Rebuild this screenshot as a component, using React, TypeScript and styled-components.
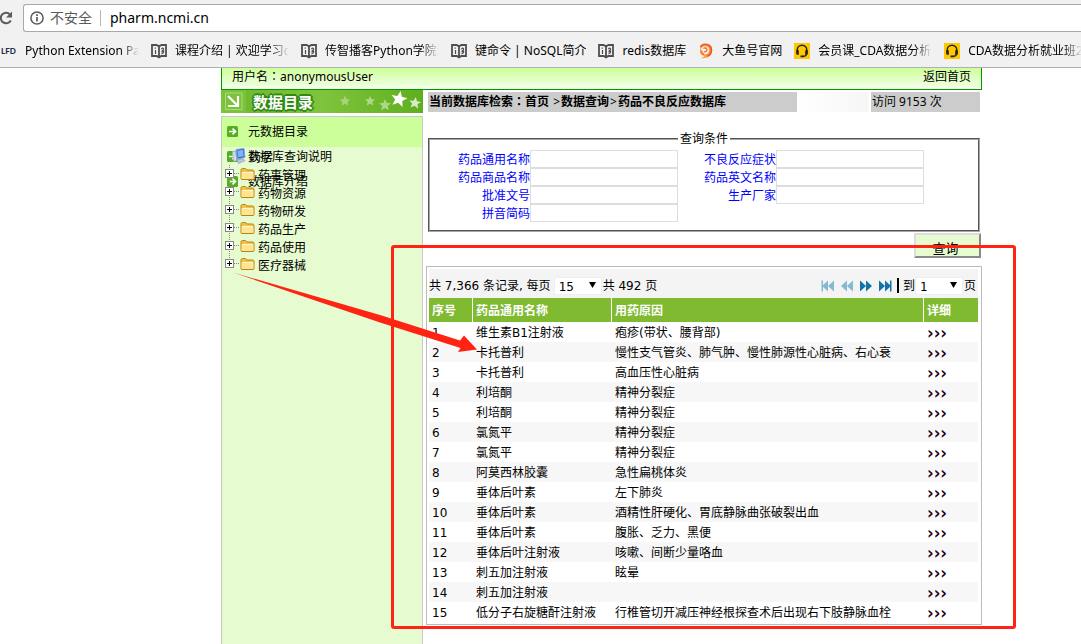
import React from "react";
import styled, { createGlobalStyle } from "styled-components";

const GlobalStyle = createGlobalStyle`
  * { box-sizing: border-box; }
  body {
    margin: 0;
    background: #fff;
    color: #000;
    font: 12px/18px "Noto Sans", "Noto Sans CJK SC", sans-serif;
  }
  a { color: inherit; text-decoration: none; }
  ul { list-style: none; margin: 0; padding: 0; }
  button, input, select { font: inherit; color: inherit; }
`;

const Screen = styled.div`
  position: relative;
  display: flex;
  flex-direction: column;
  min-height: 100vh;
  overflow: hidden;
`;

/* Browser chrome */
const Chrome = styled.header`
  flex: none;
  height: 68px;
  background: #f1f1f1;
  border-bottom: 1px solid #b0b0b0;
  overflow: hidden;
`;
const AddressRow = styled.div`
  display: flex;
  align-items: center;
  gap: 9px;
  padding-top: 4px;
`;
const ReloadButton = styled.button`
  display: flex;
  width: 14px;
  height: 16px;
  padding: 0;
  border: 0;
  background: none;
`;
const AddressBox = styled.div`
  flex: 1;
  display: flex;
  align-items: center;
  height: 28px;
  padding-left: 6px;
  background: #fff;
  border: 1px solid #a9a9a9;
  border-right: 0;
  border-radius: 3px 0 0 3px;
  font-size: 14px;
`;
const Insecure = styled.span`
  margin-left: 6px;
  padding-right: 8px;
  line-height: 16px;
  color: #5a5a5a;
  border-right: 1px solid #b5b5b5;
`;
const Url = styled.input`
  flex: 1;
  min-width: 0;
  margin-left: 9px;
  padding: 0;
  border: 0;
  outline: 0;
  background: none;
`;
const Bookmarks = styled.nav`
  display: flex;
  gap: 12px;
  padding: 9px 0 0 1px;
`;
const Bookmark = styled.a<{ $fade?: boolean }>`
  flex: none;
  display: flex;
  align-items: center;
  gap: 8px;
  height: 20px;
  white-space: nowrap;
  svg { flex: none; }
  span {
    max-width: 114px;
    overflow: hidden;
    ${(p) => p.$fade && "mask-image: linear-gradient(to right, #000 84%, transparent);"}
  }
`;

/* Site */
const Site = styled.div`
  flex: 1;
  display: flex;
  flex-direction: column;
  margin: 0 99px 0 221px;
`;
const UserBar = styled.div`
  display: flex;
  justify-content: space-between;
  height: 22px;
  padding: 0 10px;
  border: 1px solid #090;
  border-top: 0;
  background: linear-gradient(#ccff99, #f6ffec);
`;
const ColonText = styled.span`
  font-family: "Noto Sans CJK TC", sans-serif;
  line-height: 1;
`;
const Colon = () => <ColonText lang="zh-TW">：</ColonText>;
const Columns = styled.div`
  flex: 1;
  display: flex;
  gap: 3px;
`;
const Sidebar = styled.aside`
  flex: none;
  width: 202px;
  display: flex;
  flex-direction: column;
  gap: 3px;
`;
const Banner = styled.h2`
  display: flex;
  align-items: center;
  justify-content: space-between;
  height: 23px;
  margin: 0;
  background: linear-gradient(to right, #6cb52a, #7fc43c 50%, #5fae1e);
  color: #fff;
  font: bold 15px/20px "Noto Sans CJK SC", sans-serif;
  text-shadow: 1px 1px #2f8a14, -1px -1px #2f8a14, 1px -1px #2f8a14, -1px 1px #2f8a14,
    0 2px #2f8a14, 2px 0 #2f8a14, -2px 0 #2f8a14, 0 -2px #2f8a14;
`;
const BannerTitle = styled.span`
  flex: 1;
  padding-left: 7px;
`;
const Menu = styled.div`
  position: relative;
  flex: 1;
  border: 1px solid #c8c8c8;
  border-bottom: 0;
  background: #e6fcd0;
`;
const MenuItem = styled.li<{ $active?: boolean }>`
  height: ${(p) => (p.$active ? 30 : 25)}px;
  background: ${(p) => (p.$active ? "#ccff99" : "transparent")};
  a {
    display: flex;
    align-items: center;
    gap: 10px;
    height: ${(p) => (p.$active ? 28 : 18)}px;
    padding-left: 5px;
  }
  span { padding-top: 2px; }
`;
const Tree = styled.ul`
  position: absolute;
  top: 30px;
  left: 3px;
`;
const TreeItem = styled.li`
  display: flex;
  align-items: center;
  height: 18px;
  svg { flex: none; }
  a {
    margin-left: 3px;
    padding-top: 3px;
  }
`;

const Main = styled.main`
  flex: 1;
  min-width: 0;
  display: flex;
  flex-direction: column;
`;
const Crumbs = styled.div`
  display: flex;
  height: 20px;
  margin: 2px 2px 0;
  line-height: 20px;
`;
const CrumbPath = styled.div`
  flex: 1;
  padding-left: 1px;
  background: #ccc;
  font-weight: bold;
`;
const CrumbMark = styled.span`
  padding: 0 1px;
  font-weight: normal;
`;
const CrumbFade = styled.div`
  width: 74px;
  background: linear-gradient(to right, #fff, #f6f6f6 95%, #fff 98%);
`;
const Visits = styled.div`
  width: 109px;
  padding-left: 1px;
  background: #ccc;
`;
const QueryForm = styled.form`
  margin: 18px 2px 0;
  display: flex;
  flex-direction: column;
`;
const Conditions = styled.fieldset`
  height: 102px;
  margin: 0;
  padding: 2px 0 0;
  border: 2px groove #a8a8a8;
  legend {
    margin: 0 auto;
    padding: 0 2px;
  }
`;
const Fields = styled.div`
  display: flex;
  justify-content: space-between;
  padding: 0 54px 0 28px;
`;
const FieldColumn = styled.div`
  display: flex;
  flex-direction: column;
  align-items: flex-end;
`;
const Field = styled.label`
  display: flex;
  height: 18px;
  line-height: 20px;
  color: #00f;
  input {
    width: 148px;
    height: 18px;
    padding: 0 2px;
    border: 1px solid #ddd;
    outline: 0;
    color: #000;
    background: #fff;
  }
`;
const QueryButton = styled.button`
  align-self: flex-end;
  width: 67px;
  height: 25px;
  margin: 1px -1px 0 0;
  padding: 5px 4px 0 0;
  border: 2px outset #ddd;
  background: #e6fcd0;
  font-size: 13px;
  line-height: 17px;
`;
const Results = styled.section`
  margin: 8px 0 0;
  padding: 2px;
  border: 1px solid #bbb;
  font-family: "DejaVu Sans", "Noto Sans CJK SC", sans-serif;
`;
const Toolbar = styled.div`
  display: flex;
  justify-content: space-between;
  height: 29px;
  margin-right: 1px;
  padding: 4px 2px 0 0;
  background: #f4f4f4;
`;
const ToolGroup = styled.div`
  display: flex;
  align-items: center;
  white-space: nowrap;
`;
const SelectBox = styled.label<{ $before: number }>`
  position: relative;
  display: inline-flex;
  margin: 0 1px 0 ${(p) => p.$before}px;
  select {
    appearance: none;
    width: 48px;
    height: 18px;
    padding: 0 4px;
    border: 1px solid #eee;
    border-radius: 0;
    background: #fff;
  }
  svg {
    position: absolute;
    right: 6px;
    top: 5px;
    pointer-events: none;
  }
`;
const PageButton = styled.button`
  display: flex;
  width: 19px;
  height: 14px;
  padding: 0;
  border: 0;
  background: none;
`;
const Divider = styled.span`
  width: 2px;
  height: 15px;
  margin: 0 4px 0 0;
  background: #000;
`;
const Table = styled.table`
  width: calc(100% - 1px);
  margin-right: 1px;
  border-collapse: separate;
  border-spacing: 0;
  table-layout: fixed;
  th {
    height: 24px;
    padding: 2px 3px 0;
    background: #7fba31;
    color: #fff;
    text-align: left;
    border-right: 1px solid #fff;
  }
  th:last-child { border-right: 0; }
  td {
    height: 20px;
    padding: 2px 3px 0;
    white-space: nowrap;
  }
  tbody tr:nth-child(even) { background: #f7f7f7; }
`;
const Detail = styled.a`
  display: block;
  color: #1a0020;
  font: bold 18px/16px "DejaVu Sans Condensed", "DejaVu Sans", sans-serif;
`;

/* Red marks drawn over the page */
const Highlight = styled.div`
  position: absolute;
  top: 245px;
  left: 391px;
  right: 65px;
  height: 384px;
  border: 3px solid #ff2314;
  border-radius: 3px;
  pointer-events: none;
`;
const Arrow = styled.svg`
  position: absolute;
  top: 265px;
  left: 230px;
  pointer-events: none;
`;

const BookIcon = () => (
  <svg width="16" height="16" viewBox="0 0 16 16" fill="none" stroke="#4f4f4f" strokeWidth="1.8">
    <path d="M1 2h4.500L8 3.400 10.500 2H15v11h-4.600L8 14.400 5.600 13H1zM8 3.400v10.800" />
    <path d="M4.200 4.500v1.300M4.500 7v4M10.500 6.200c.2-1.600 2.200-1.400 2 .2-.2 1.200-1.800 1.100-1.500 2.300l1.600-.4c.2 1.600-1 2.600-2.200 2.400" strokeWidth="1.200" />
  </svg>
);
const FishIcon = () => (
  <svg width="16" height="16" viewBox="0 0 16 16" fill="none">
    <path d="M2.500 3.500C5-.5 13.800.2 14.200 7c.3 5-4.200 8.600-11.400 8.200 1.800-.5 3-1.200 3.800-2.200C3 12.500 1.800 10 2 8" fill="#ff9a3a" />
    <path d="M2.500 4C5-.3 13.400.6 13.400 7c0 3.200-1.600 5.200-4 6.300" stroke="#f4511e" strokeWidth="1.600" />
    <circle cx="7" cy="7.300" r="4" fill="#f1f1f1" />
    <path d="M5.500 5.600c1.500-1.600 4-.2 3.300 1.800-.4 1.300-1.800 1.700-3 1.500M3.500 7.500c0 2 1 3.500 2.500 3.700" stroke="#f4661e" strokeWidth="1.300" />
  </svg>
);
const HeadsetIcon = () => (
  <svg width="16" height="16" viewBox="0 0 16 16" fill="none">
    <rect width="16" height="16" fill="#ffc800" />
    <path d="M3.200 8.500V7a4.800 4.800 0 0 1 9.600 0v2.500c0 2.500-1.500 3.900-4 4" stroke="#222" strokeWidth="1.400" />
    <path d="M2.200 7.200h2.600v4.600H3.600c-.9 0-1.400-.6-1.400-1.400zM11.200 7.200h2.600v3.200c0 .8-.5 1.400-1.400 1.400h-1.200zM6.500 12.500h3v1.800h-3z" fill="#222" />
  </svg>
);
const LfdIcon = () => (
  <svg width="16" height="16" viewBox="0 0 16 16">
    <text x="0" y="11" fontFamily="Lato, sans-serif" fontWeight="900" fontSize="8" fill="#26324f">LFD</text>
  </svg>
);
const ArrowBox = () => (
  <svg width="11" height="11" viewBox="0 0 11 11">
    <rect width="11" height="11" rx="1.500" fill="#55ad20" />
    <path d="M2 5.500h6M5.500 2.700l3 2.800-3 2.800" stroke="#fff" strokeWidth="1.700" fill="none" />
  </svg>
);
const PlusLines = ({ last }: { last?: boolean }) => (
  <svg width="15" height="18" viewBox="0 0 15 18" fill="none" shapeRendering="crispEdges">
    <path d={last ? "M4.500 0v9" : "M4.500 0v18"} stroke="#888" strokeDasharray="1 1" />
    <path d="M9 8.500h6" stroke="#888" strokeDasharray="1 1" />
    <rect x=".5" y="4.500" width="8" height="8" fill="#fff" stroke="#888" />
    <path d="M2 8.500h5M4.500 6v5" stroke="#000" />
  </svg>
);
const FolderIcon = () => (
  <svg width="15" height="14" viewBox="0 0 15 14">
    <path d="M1 3.200C1 2 1.500 1.500 2.500 1.500h3L7 3h5.500c1 0 1.500.5 1.500 1.500v7c0 .7-.4 1-1 1H2c-.7 0-1-.3-1-1z" fill="#f2c14a" stroke="#b98512" />
    <path d="M1.500 5.500h12v5.800c0 .5-.2.700-.7.700H2.200c-.5 0-.7-.2-.7-.7z" fill="#ffe593" />
    <path d="M2 5.500h11" stroke="#fff6cf" />
  </svg>
);
const ComputerIcon = () => (
  <svg width="15" height="16" viewBox="0 0 15 16">
    <path d="M5 1.500l8-1 1 9-7.500 1.500z" fill="#2f66d0" stroke="#8aa4d8" />
    <path d="M6.200 2.700l5.800-.8.600 6.400-5.200 1z" fill="#7db4ff" />
    <path d="M6 12l6-1.200 2 2-6.500 2.700z" fill="#bcc8de" stroke="#7f90b5" strokeWidth=".6" />
    <path d="M1.500 3.500l3-.5 1.300 9.500-3 1z" fill="#cfdcf2" stroke="#8aa4d8" strokeWidth=".6" />
  </svg>
);
const star = "M0-6L1.700-2 6-1.800 2.700 1 3.800 5.200 0 2.900-3.800 5.200-2.700 1-6-1.800-1.700-2z";
const BannerStars = () => (
  <svg width="90" height="23" viewBox="0 0 90 23" fill="#fff">
    <path d={star} transform="translate(12 11) scale(.9)" opacity=".35" />
    <path d={star} transform="translate(37 11) scale(.85)" opacity=".45" />
    <path d={star} transform="translate(52 15)" opacity=".45" />
    <path d={star} transform="translate(66 9) rotate(12) scale(1.350)" />
    <path d={star} transform="translate(82 13) rotate(8)" opacity=".75" />
  </svg>
);
const BannerArrow = () => (
  <svg width="25" height="23" viewBox="0 0 25 23" fill="none">
    <rect width="25" height="23" fill="#7cc23c" />
    <path d="M4.500 20V3h16.500v16.500H4.500" stroke="#a8dc78" />
    <path d="M7 6l9 9M17 6v10H7" stroke="#fff" strokeWidth="2.200" />
  </svg>
);
const Triangle = () => (
  <svg width="7" height="6" viewBox="0 0 7 6"><path d="M0 0h7L3.500 6z" /></svg>
);

type PageKind = "first" | "prev" | "next" | "last";
const PageIcon = ({ kind }: { kind: PageKind }) => {
  const back = kind === "first" || kind === "prev";
  const bar = kind === "first" || kind === "last";
  return (
    <svg width="14" height="14" viewBox="0 0 14 14" fill={back ? "#86b8d0" : "#1274a6"}>
      <g transform={back ? "translate(14 0) scale(-1 1)" : undefined}>
        <path d="M1 1.500L7 7 1 12.500zM7 1.500L13 7 7 12.500z" />
        {bar && <path d="M12 1.500h1.500v11H12z" />}
      </g>
    </svg>
  );
};

const bookmarks = [
  { label: "Python Extension Packages", Icon: LfdIcon, fade: true },
  { label: "课程介绍 | 欢迎学习django", Icon: BookIcon, fade: true },
  { label: "传智播客Python学院课程", Icon: BookIcon, fade: true },
  { label: "键命令 | NoSQL简介", Icon: BookIcon },
  { label: "redis数据库", Icon: BookIcon },
  { label: "大鱼号官网", Icon: FishIcon },
  { label: "会员课_CDA数据分析师", Icon: HeadsetIcon, fade: true },
  { label: "CDA数据分析就业班2018", Icon: HeadsetIcon, fade: true },
];
const menuItems = ["元数据目录", "数据库查询说明", "数据库介绍"];
const categories = ["药事管理", "药物资源", "药物研发", "药品生产", "药品使用", "医疗器械"];
const leftFields = ["药品通用名称", "药品商品名称", "批准文号", "拼音简码"];
const rightFields = ["不良反应症状", "药品英文名称", "生产厂家"];
const records = [
  ["维生素B1注射液", "疱疹(带状、腰背部)"],
  ["卡托普利", "慢性支气管炎、肺气肿、慢性肺源性心脏病、右心衰"],
  ["卡托普利", "高血压性心脏病"],
  ["利培酮", "精神分裂症"],
  ["利培酮", "精神分裂症"],
  ["氯氮平", "精神分裂症"],
  ["氯氮平", "精神分裂症"],
  ["阿莫西林胶囊", "急性扁桃体炎"],
  ["垂体后叶素", "左下肺炎"],
  ["垂体后叶素", "酒精性肝硬化、胃底静脉曲张破裂出血"],
  ["垂体后叶素", "腹胀、乏力、黑便"],
  ["垂体后叶注射液", "咳嗽、间断少量咯血"],
  ["刺五加注射液", "眩晕"],
  ["刺五加注射液", ""],
  ["低分子右旋糖酐注射液", "行椎管切开减压神经根探查术后出现右下肢静脉血栓"],
];
const pageButtons: { kind: PageKind; label: string }[] = [
  { kind: "first", label: "首页" },
  { kind: "prev", label: "上一页" },
  { kind: "next", label: "下一页" },
  { kind: "last", label: "末页" },
];

const FieldList = ({ names }: { names: string[] }) => (
  <FieldColumn>
    {names.map((name) => (
      <Field key={name}>
        {name}
        <input type="text" />
      </Field>
    ))}
  </FieldColumn>
);

export default function App() {
  return (
    <Screen lang="zh-CN">
      <GlobalStyle />
      <Chrome>
        <AddressRow>
          <ReloadButton aria-label="重新加载">
            <svg width="14" height="16" viewBox="0 0 14 16" fill="none">
              <path d="M9.800 4.200A5.300 5.300 0 1 0 10.800 10.500" stroke="#5a5a5a" strokeWidth="2" />
              <path d="M12 1.500v6H6z" fill="#5a5a5a" />
            </svg>
          </ReloadButton>
          <AddressBox>
            <svg width="14" height="14" viewBox="0 0 14 14" fill="none" stroke="#5a5a5a" strokeWidth="1.500">
              <circle cx="7" cy="7" r="6.100" />
              <path d="M7 6v4.500M7 3.300v1.600" strokeWidth="1.700" />
            </svg>
            <Insecure>不安全</Insecure>
            <Url aria-label="地址" defaultValue="pharm.ncmi.cn" />
          </AddressBox>
        </AddressRow>
        <Bookmarks>
          {bookmarks.map(({ label, Icon, fade }) => (
            <Bookmark key={label} href="#" $fade={fade}>
              <Icon />
              <span>{label}</span>
            </Bookmark>
          ))}
        </Bookmarks>
      </Chrome>

      <Site>
        <UserBar>
          <span>用户名<Colon />anonymousUser</span>
          <a href="#">返回首页</a>
        </UserBar>
        <Columns>
          <Sidebar>
            <Banner>
              <BannerArrow />
              <BannerTitle>数据目录</BannerTitle>
              <BannerStars />
            </Banner>
            <Menu>
              <ul>
                {menuItems.map((name, i) => (
                  <MenuItem key={name} $active={i === 0}>
                    <a href="#">
                      <ArrowBox />
                      <span>{name}</span>
                    </a>
                  </MenuItem>
                ))}
              </ul>
              <Tree>
                <TreeItem>
                  <svg width="6" height="18" />
                  <ComputerIcon />
                  <a href="#">药学</a>
                </TreeItem>
                {categories.map((name, i) => (
                  <TreeItem key={name}>
                    <PlusLines last={i === categories.length - 1} />
                    <FolderIcon />
                    <a href="#">{name}</a>
                  </TreeItem>
                ))}
              </Tree>
            </Menu>
          </Sidebar>

          <Main>
            <Crumbs>
              <CrumbPath>
                当前数据库检索<Colon />首页 <CrumbMark>&gt;</CrumbMark>数据查询<CrumbMark>&gt;</CrumbMark>药品不良反应数据库
              </CrumbPath>
              <CrumbFade />
              <Visits>访问 9153 次</Visits>
            </Crumbs>
            <QueryForm onSubmit={(e) => e.preventDefault()}>
              <Conditions>
                <legend>查询条件</legend>
                <Fields>
                  <FieldList names={leftFields} />
                  <FieldList names={rightFields} />
                </Fields>
              </Conditions>
              <QueryButton type="submit">查询</QueryButton>
            </QueryForm>
            <Results>
              <Toolbar>
                <ToolGroup>
                  共 7,366 条记录, 每页
                  <SelectBox $before={3}>
                    <select aria-label="每页记录数"><option>15</option></select>
                    <Triangle />
                  </SelectBox>
                  共 492 页
                </ToolGroup>
                <ToolGroup>
                  {pageButtons.map(({ kind, label }) => (
                    <PageButton key={kind} aria-label={label}><PageIcon kind={kind} /></PageButton>
                  ))}
                  <Divider />
                  到
                  <SelectBox $before={0}>
                    <select aria-label="页码"><option>1</option></select>
                    <Triangle />
                  </SelectBox>
                  页
                </ToolGroup>
              </Toolbar>
              <Table>
                <colgroup>
                  <col style={{ width: 44 }} />
                  <col style={{ width: 139 }} />
                  <col />
                  <col style={{ width: 54 }} />
                </colgroup>
                <thead>
                  <tr>
                    <th>序号</th>
                    <th>药品通用名称</th>
                    <th>用药原因</th>
                    <th>详细</th>
                  </tr>
                </thead>
                <tbody>
                  {records.map(([name, reason], i) => (
                    <tr key={i}>
                      <td>{i + 1}</td>
                      <td>{name}</td>
                      <td>{reason}</td>
                      <td><Detail href="#">›››</Detail></td>
                    </tr>
                  ))}
                </tbody>
              </Table>
            </Results>
          </Main>
        </Columns>
      </Site>

      <Highlight />
      <Arrow width="250" height="90" viewBox="0 0 250 90" fill="#ff2314">
        <path d="M3 7.500L150 50 230 75.500 234 70.500 247 84.500 228 87 230.500 83 150 57.500z" />
      </Arrow>
    </Screen>
  );
}
